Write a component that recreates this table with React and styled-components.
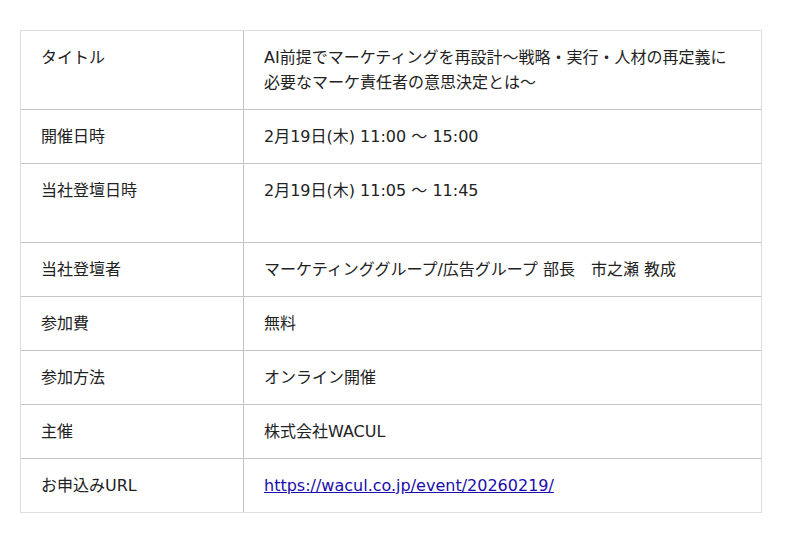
import React from "react";
import styled, { createGlobalStyle } from "styled-components";

const Global = createGlobalStyle`
  *, *::before, *::after { box-sizing: border-box; }
  html, body { margin: 0; padding: 0; background: #fff; }
  body {
    font-family: "DejaVu Sans", "Noto Sans CJK JP", sans-serif;
    font-size: 16px;
    color: #222;
  }
`;

const Page = styled.main`
  padding: 30px 20px;
`;

const Table = styled.table`
  width: 742px;
  table-layout: fixed;
  border-collapse: separate;
  border-spacing: 0;
  border: 1px solid #dddddd;
`;

const Row = styled.tr`
  & + & > td {
    border-top: 1px solid #c4c4c4;
  }
`;

const Label = styled.td`
  width: 222px;
  padding: 14px 20px;
  line-height: 25px;
  vertical-align: top;
`;

const Value = styled.td`
  padding: 14px 20px;
  line-height: 25px;
  vertical-align: top;
  border-left: 1px solid #c4c4c4;
`;

const Lines = styled.div`
  min-height: ${(p) => (p.$lines || 1) * 25}px;
`;

const Link = styled.a`
  color: #1a0dab;
  text-decoration: underline;
`;

const rows = [
  {
    label: "タイトル",
    value: "AI前提でマーケティングを再設計〜戦略・実行・人材の再定義に必要なマーケ責任者の意思決定とは〜",
  },
  { label: "開催日時", value: "2月19日(木) 11:00 〜 15:00" },
  { label: "当社登壇日時", value: "2月19日(木) 11:05 〜 11:45", lines: 2 },
  { label: "当社登壇者", value: "マーケティンググループ/広告グループ 部長　市之瀬 教成" },
  { label: "参加費", value: "無料" },
  { label: "参加方法", value: "オンライン開催" },
  { label: "主催", value: "株式会社WACUL" },
  {
    label: "お申込みURL",
    link: "https://wacul.co.jp/event/20260219/",
  },
];

export default function App() {
  return (
    <Page>
      <Global />
      <Table>
        <tbody>
          {rows.map((r) => (
            <Row key={r.label}>
              <Label>{r.label}</Label>
              <Value>
                <Lines $lines={r.lines}>
                  {r.link ? <Link href={r.link}>{r.link}</Link> : r.value}
                </Lines>
              </Value>
            </Row>
          ))}
        </tbody>
      </Table>
    </Page>
  );
}
